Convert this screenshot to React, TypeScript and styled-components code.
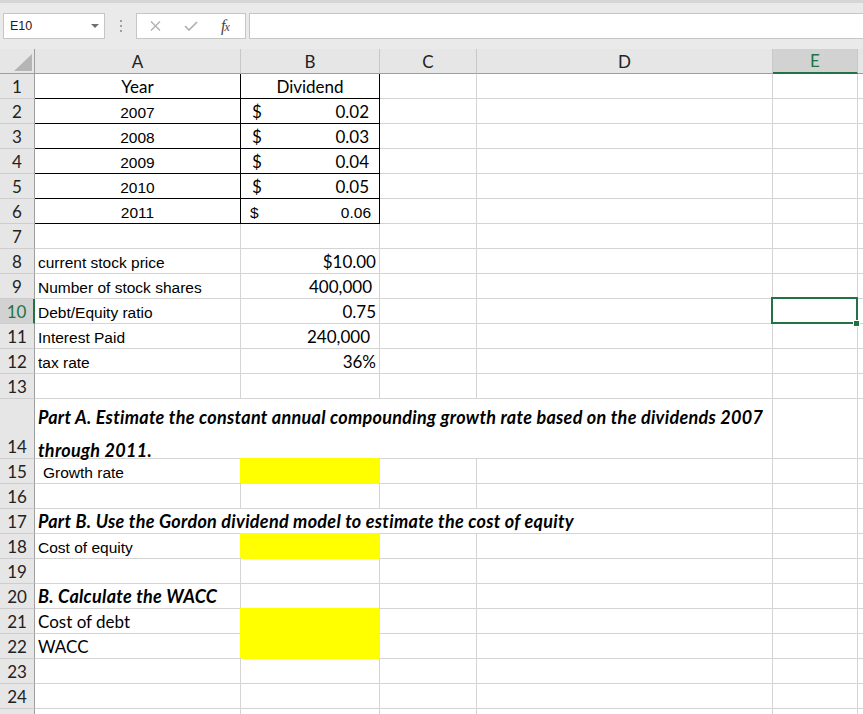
import React from 'react';
import styled, { createGlobalStyle, css } from 'styled-components';

const CAL = `Lato, 'Liberation Sans', sans-serif`;
const ARIAL = `'Liberation Sans', Arial, sans-serif`;
const GRID = '#d4d4d4';
const GREEN = '#217346';
const BLACK = '#000';

const GlobalStyle = createGlobalStyle`
  html, body {
    margin: 0;
    padding: 0;
    background: #fff;
    overflow: hidden;
  }
  body {
    font-family: ${ARIAL};
  }
`;

const Screen = styled.div`
  width: 863px;
  height: 714px;
  overflow: hidden;
  display: flex;
  flex-direction: column;
  background: #fff;
`;

const FormulaBar = styled.div`
  flex: none;
  height: 49px;
  box-sizing: border-box;
  background: #eaeaea;
  border-top: 3px solid #d6d6d6;
  display: flex;
  align-items: flex-start;
  padding: 10px 0 0 3px;
`;

const NameBox = styled.div`
  width: 102px;
  height: 26px;
  box-sizing: border-box;
  background: #fff;
  border: 1px solid #c6c6c6;
  display: flex;
  align-items: center;
  justify-content: space-between;
  padding: 0 5px 0 6px;
  font-family: ${ARIAL};
  font-size: 12.5px;
  color: #222;
`;

const DropArrow = styled.span`
  width: 0;
  height: 0;
  border-left: 4px solid transparent;
  border-right: 4px solid transparent;
  border-top: 4px solid #6f6f6f;
`;

const Grip = styled.div`
  width: 31px;
  height: 26px;
  display: flex;
  flex-direction: column;
  align-items: center;
  justify-content: center;
  gap: 3px;

  span {
    width: 2px;
    height: 2px;
    background: #a0a0a0;
  }
`;

const EditBox = styled.div`
  width: 110px;
  height: 26px;
  box-sizing: border-box;
  background: #fff;
  border: 1px solid #c6c6c6;
  display: flex;
  align-items: center;
  gap: 23px;
  padding-left: 13px;
`;

const Fx = styled.span`
  font-family: 'Liberation Serif', serif;
  font-style: italic;
  font-size: 16px;
  color: #444;
  letter-spacing: -1px;

  small {
    font-size: 12px;
  }
`;

const FormulaInput = styled.div`
  flex: 1;
  height: 26px;
  margin-left: 3px;
  box-sizing: border-box;
  background: #fff;
  border: 1px solid #c6c6c6;
  border-right: none;
`;

const Sheet = styled.div`
  flex: 1;
  display: grid;
  grid-template-columns: 35px 206px 139px 97px 296px 85px 1fr;
  grid-template-rows: repeat(14, 25px) 60px repeat(11, 25px);
  background: #fff;
`;

const Corner = styled.div`
  box-sizing: border-box;
  background: #e6e6e6;
  border-right: 1px solid #9e9e9e;
  border-bottom: 1px solid #9e9e9e;
  display: flex;
  align-items: flex-end;
  justify-content: flex-end;
  padding: 0 2px 2px 0;
`;

const ColHead = styled.div<{ $sel?: boolean }>`
  box-sizing: border-box;
  background: ${p => (p.$sel ? '#d2d2d2' : '#e6e6e6')};
  border-right: 1px solid #c8c8c8;
  border-bottom: ${p => (p.$sel ? `2px solid ${GREEN}` : '1px solid #9e9e9e')};
  display: flex;
  align-items: center;
  justify-content: center;
  font-family: ${CAL};
  font-size: 17px;
  color: ${p => (p.$sel ? GREEN : '#222')};
`;

const RowHead = styled.div<{ $sel?: boolean }>`
  box-sizing: border-box;
  background: ${p => (p.$sel ? '#d2d2d2' : '#e6e6e6')};
  border-right: ${p => (p.$sel ? `2px solid ${GREEN}` : '1px solid #9e9e9e')};
  border-bottom: 1px solid #cdcdcd;
  display: flex;
  align-items: flex-end;
  justify-content: center;
  padding-bottom: 1.5px;
  font-family: ${CAL};
  font-size: 17px;
  color: ${p => (p.$sel ? GREEN : '#222')};
`;

type Align = 'left' | 'center' | 'right';

const Cell = styled.div<{
  $cal?: boolean;
  $bi?: boolean;
  $align?: Align;
  $fill?: boolean;
  $span?: number;
  $rb?: string;
  $bb?: string;
  $pl?: number;
  $pr?: number;
  $sel?: boolean;
  $split?: boolean;
}>`
  box-sizing: border-box;
  position: relative;
  grid-column: span ${p => p.$span ?? 1};
  border-right: 1px solid ${p => p.$rb ?? GRID};
  border-bottom: 1px solid ${p => p.$bb ?? GRID};
  display: flex;
  align-items: flex-end;
  justify-content: ${p =>
    p.$split ? 'space-between' : p.$align === 'center' ? 'center' : p.$align === 'right' ? 'flex-end' : 'flex-start'};
  padding: 0 ${p => p.$pr ?? 3}px 1.5px ${p => p.$pl ?? 3}px;
  font-family: ${p => (p.$cal || p.$bi ? CAL : ARIAL)};
  font-size: ${p => (p.$bi ? 18 : p.$cal ? 17 : 15.5)}px;
  font-weight: ${p => (p.$bi ? 700 : 400)};
  font-style: ${p => (p.$bi ? 'italic' : 'normal')};
  letter-spacing: ${p => (p.$bi ? '0.28px' : 'normal')};
  white-space: nowrap;
  color: #000;

  ${p =>
    p.$fill &&
    css`
      background: #ffff00;
      border-right-color: #ffff00;
      border-bottom-color: #ffff00;
      box-shadow: -1px -1px 0 #ffff00;
    `}

  ${p =>
    p.$sel &&
    css`
      &::after {
        content: '';
        position: absolute;
        left: -2px;
        top: -2px;
        right: -1px;
        bottom: -1px;
        border: 2px solid ${GREEN};
      }
      &::before {
        content: '';
        position: absolute;
        right: -3px;
        bottom: -4px;
        width: 5px;
        height: 5px;
        background: ${GREEN};
        border: 1px solid #fff;
        z-index: 1;
      }
    `}
`;

const Lines = styled.div`
  display: flex;
  flex-direction: column;
  gap: 13px;
  margin-bottom: -3.5px;

  span {
    line-height: 20px;
  }
`;

type CellDef = {
  t?: React.ReactNode;
  cal?: boolean;
  bi?: boolean;
  align?: Align;
  fill?: boolean;
  span?: number;
  rb?: string;
  bb?: string;
  pl?: number;
  pr?: number;
  sel?: boolean;
  split?: boolean;
};

const boxed = { rb: BLACK, bb: BLACK };

const yearCell = (y: string): CellDef => ({ t: y, align: 'center', ...boxed });
const divCell = (v: string, cal = true): CellDef => ({
  t: (
    <>
      <span>$</span>
      <span>{v}</span>
    </>
  ),
  cal,
  split: true,
  pl: cal ? 11 : 9,
  pr: cal ? 10 : 8,
  ...boxed,
});

// cells listed from column A onward; missing ones up to column F are filled with empty cells
const rows: CellDef[][] = [
  [{ t: 'Year', cal: true, align: 'center', ...boxed }, { t: 'Dividend', cal: true, align: 'center', ...boxed }],
  [yearCell('2007'), divCell('0.02')],
  [yearCell('2008'), divCell('0.03')],
  [yearCell('2009'), divCell('0.04')],
  [yearCell('2010'), divCell('0.05')],
  [yearCell('2011'), divCell('0.06', false)],
  [],
  [{ t: 'current stock price' }, { t: '$10.00', cal: true, align: 'right', pr: 3 }],
  [{ t: 'Number of stock shares' }, { t: '400,000', cal: true, align: 'right', pr: 7 }],
  [{ t: 'Debt/Equity ratio' }, { t: '0.75', cal: true, align: 'right', pr: 3 }, {}, {}, { sel: true }],
  [{ t: 'Interest Paid' }, { t: '240,000', cal: true, align: 'right', pr: 9 }],
  [{ t: 'tax rate' }, { t: '36%', cal: true, align: 'right', pr: 3 }],
  [],
  [
    {
      t: (
        <Lines>
          <span>Part A. Estimate the constant annual compounding growth rate based on the dividends 2007</span>
          <span>through 2011.</span>
        </Lines>
      ),
      bi: true,
      span: 4,
    },
  ],
  [{ t: ' Growth rate', pl: 8 }, { fill: true }],
  [],
  [{ t: 'Part B. Use the Gordon dividend model to estimate the cost of equity', bi: true, span: 4 }],
  [{ t: 'Cost of equity' }, { fill: true }],
  [],
  [{ t: 'B. Calculate the WACC', bi: true }],
  [{ t: 'Cost of debt', cal: true }, { fill: true }],
  [{ t: 'WACC', cal: true }, { fill: true }],
  [],
  [],
  [],
];

const COLS = 6;

const fillRow = (cells: CellDef[]): CellDef[] => {
  const used = cells.reduce((n, c) => n + (c.span ?? 1), 0);
  return [...cells, ...Array.from({ length: COLS - used }, () => ({}))];
};

const columns = ['A', 'B', 'C', 'D', 'E', ''];

function App() {
  return (
    <Screen>
      <GlobalStyle />
      <FormulaBar>
        <NameBox>
          E10
          <DropArrow />
        </NameBox>
        <Grip>
          <span />
          <span />
          <span />
        </Grip>
        <EditBox>
          <svg width="11" height="10" viewBox="0 0 11 10">
            <path d="M1 0.5 L10 9.5 M10 0.5 L1 9.5" stroke="#b0b0b0" strokeWidth="1.3" fill="none" />
          </svg>
          <svg width="14" height="10" viewBox="0 0 14 10">
            <path d="M1 5 L5 9 L13 1" stroke="#b0b0b0" strokeWidth="1.7" fill="none" />
          </svg>
          <Fx>
            f<small>x</small>
          </Fx>
        </EditBox>
        <FormulaInput />
      </FormulaBar>

      <Sheet>
        <Corner>
          <svg width="18" height="17" viewBox="0 0 18 17">
            <polygon points="18,0 18,17 0,17" fill="#b5b5b5" />
          </svg>
        </Corner>
        {columns.map((c, i) => (
          <ColHead key={i} $sel={c === 'E'}>
            {c}
          </ColHead>
        ))}

        {rows.map((cells, r) => (
          <React.Fragment key={r}>
            <RowHead $sel={r + 1 === 10}>{r + 1}</RowHead>
            {fillRow(cells).map((c, i) => (
              <Cell
                key={i}
                $cal={c.cal}
                $bi={c.bi}
                $align={c.align}
                $fill={c.fill}
                $span={c.span}
                $rb={c.rb}
                $bb={c.bb}
                $pl={c.pl}
                $pr={c.pr}
                $sel={c.sel}
                $split={c.split}
              >
                {c.t}
              </Cell>
            ))}
          </React.Fragment>
        ))}
      </Sheet>
    </Screen>
  );
}

export default App;
